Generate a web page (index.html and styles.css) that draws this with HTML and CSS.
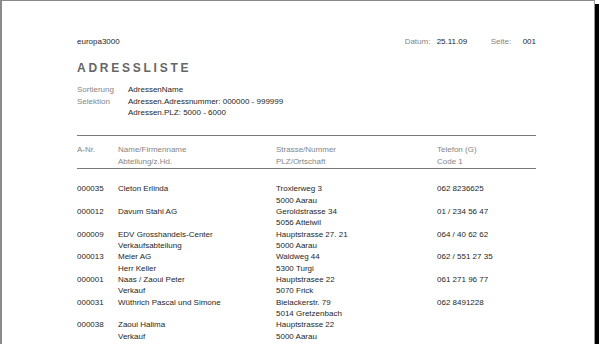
FILE: index.html
```html
<!DOCTYPE html>
<html lang="de">
<head>
<meta charset="utf-8">
<title>Adressliste</title>
<link rel="stylesheet" href="styles.css">
</head>
<body>
<div class="page">
  <div class="top">
    <div class="val">europa3000</div>
    <div class="meta">
      <span class="lbl m-lbl1">Datum:</span>
      <span class="val m-val1">25.11.09</span>
      <span class="lbl m-lbl2">Seite:</span>
      <span class="val">001</span>
    </div>
  </div>
  <h1 class="title">ADRESSLISTE</h1>
  <div class="params">
    <div class="lbl">Sortierung</div><div class="val">AdressenName</div>
    <div class="lbl">Selektion</div><div class="val">Adressen.Adressnummer: 000000 - 999999<br>Adressen.PLZ: 5000 - 6000</div>
  </div>
  <div class="thead table">
    <div class="lbl">A-Nr.</div>
    <div class="lbl">Name/Firmenname<br>Abteilung/z.Hd.</div>
    <div class="lbl">Strasse/Nummer<br>PLZ/Ortschaft</div>
    <div class="lbl">Telefon (G)<br>Code 1</div>
  </div>
  <div class="tbody">
    <div class="table row"><div class="val">000035</div><div class="val">Cleton Erlinda</div><div class="val">Troxlerweg 3<br>5000 Aarau</div><div class="val">062 8236625</div></div>
    <div class="table row"><div class="val">000012</div><div class="val">Davum Stahl AG</div><div class="val">Geroldstrasse 34<br>5056 Attelwil</div><div class="val">01 / 234 56 47</div></div>
    <div class="table row"><div class="val">000009</div><div class="val">EDV Grosshandels-Center<br>Verkaufsabteilung</div><div class="val">Hauptstrasse 27. 21<br>5000 Aarau</div><div class="val">064 / 40 62 62</div></div>
    <div class="table row"><div class="val">000013</div><div class="val">Meier AG<br>Herr Keller</div><div class="val">Waldweg 44<br>5300 Turgi</div><div class="val">062 / 551 27 35</div></div>
    <div class="table row"><div class="val">000001</div><div class="val">Naas / Zaoui Peter<br>Verkauf</div><div class="val">Hauptstrasee 22<br>5070 Frick</div><div class="val">061 271 96 77</div></div>
    <div class="table row"><div class="val">000031</div><div class="val">Wüthrich Pascal und Simone</div><div class="val">Bielackerstr. 79<br>5014 Gretzenbach</div><div class="val">062 8491228</div></div>
    <div class="table row"><div class="val">000038</div><div class="val">Zaoui Halima<br>Verkauf</div><div class="val">Hauptstrasse 22<br>5000 Aarau</div><div class="val"></div></div>
  </div>
</div>
</body>
</html>
```
FILE: styles.css
```css
html, body {
  margin: 0;
  padding: 0;
  background: #fff;
}
body {
  font-family: "Liberation Sans", Arial, sans-serif;
  font-size: 8px;
  line-height: 11.36px;
  height: 344px;
  overflow: hidden;
}
.page {
  box-sizing: border-box;
  width: 595px;
  height: 344px;
  overflow: hidden;
  background: #fff;
  border-left: 2px solid #8a8a8a;
  border-top: 1px solid #8a8a8a;
  border-right: 1px solid #9a9a9a;
  box-shadow: 4px 4px 0 #000;
  padding: 35px 0 0 75px;
}
.lbl { color: #858585; }
.val { color: #262626; }
.top {
  display: flex;
  justify-content: space-between;
  width: 459px;
}
.meta { display: flex; }
.m-lbl1 { width: 32px; }
.m-val1 { width: 54px; }
.m-lbl2 { width: 32px; }
.title {
  margin: 14px 0 0 0;
  font-size: 12px;
  line-height: 14px;
  font-weight: bold;
  letter-spacing: 2.75px;
  color: #666;
}
.params {
  display: grid;
  grid-template-columns: 51px auto;
  margin-top: 9px;
}
.table {
  display: grid;
  grid-template-columns: 41px 158px 161px 99px;
  width: 459px;
}
.thead {
  margin-top: 17px;
  border-top: 1px solid #7a7a7a;
  border-bottom: 1px solid #7a7a7a;
  padding: 8px 0 1px 0;
}
.tbody {
  padding-top: 14px;
}
.row {
  min-height: 22.72px;
}
```
